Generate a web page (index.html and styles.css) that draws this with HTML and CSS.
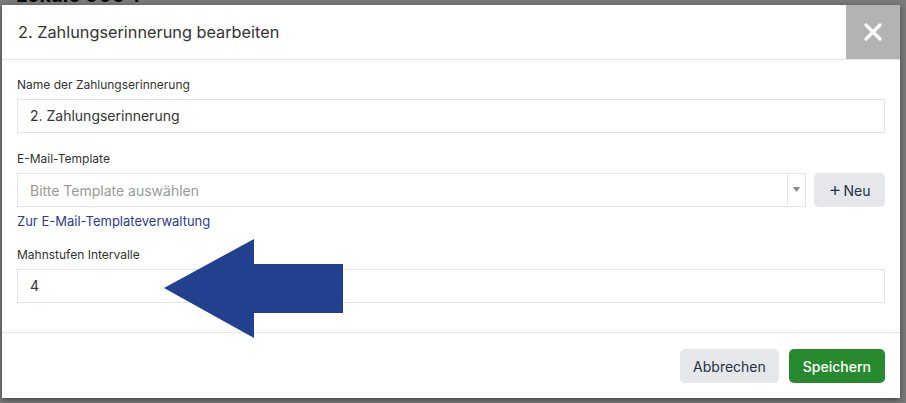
FILE: index.html
```html
<!DOCTYPE html>
<html lang="de">
<head>
<meta charset="utf-8">
<title>2. Zahlungserinnerung bearbeiten</title>
<link rel="stylesheet" href="styles.css">
</head>
<body>
<div class="page">
  <div class="page-title">Lokale 000 T</div>
  <div class="page-rows">
    <div class="page-row"></div>
    <div class="page-row"></div>
    <div class="page-row"></div>
  </div>
</div>
<div class="overlay"></div>
<div class="modal">
  <div class="modal-header">
    <h2 class="modal-title">2. Zahlungserinnerung bearbeiten</h2>
    <button class="close-btn" aria-label="Schließen">
      <svg width="18" height="18" viewBox="0 0 18 18"><path d="M2 2 L16 16 M16 2 L2 16" stroke="#fff" stroke-width="3.2" stroke-linecap="round"/></svg>
    </button>
  </div>
  <div class="modal-body">
    <div class="field">
      <label class="label">Name der Zahlungserinnerung</label>
      <div class="input">2. Zahlungserinnerung</div>
    </div>
    <div class="field">
      <label class="label">E-Mail-Template</label>
      <div class="select-row">
        <div class="select">
          <span class="placeholder">Bitte Template auswählen</span>
          <span class="select-arrow"><svg width="7" height="5" viewBox="0 0 7 5"><path d="M0 0 H7 L3.5 5 Z" fill="#888"/></svg></span>
        </div>
        <button class="btn btn-light btn-new"><span class="plus">+</span>Neu</button>
      </div>
      <a class="link">Zur E-Mail-Templateverwaltung</a>
    </div>
    <div class="field">
      <label class="label">Mahnstufen Intervalle</label>
      <div class="input">4</div>
    </div>
  </div>
  <div class="modal-footer">
    <button class="btn btn-light btn-footer">Abbrechen</button>
    <button class="btn btn-green btn-footer">Speichern</button>
  </div>
</div>
<svg class="annotation-arrow" width="906" height="403" viewBox="0 0 906 403">
  <polygon points="164,288 254,239 254,264 343,264 343,313 254,313 254,338" fill="#21418f"/>
</svg>
</body>
</html>
```

FILE: styles.css
```css
* { box-sizing: border-box; }
html, body { margin: 0; padding: 0; }
body {
  width: 906px;
  height: 403px;
  overflow: hidden;
  position: relative;
  font-family: Inter, "Noto Sans", "Liberation Sans", sans-serif;
  background: #fff;
  color: #333;
}
.page { padding: 0 16px; }
.page-title {
  font-weight: 700;
  font-size: 20px;
  line-height: 20px;
  margin-top: -15px;
  color: #111;
}
.page-rows { margin-top: 180px; }
.page-row { height: 62px; border-bottom: 1px solid #444; }
.overlay {
  position: absolute;
  inset: 0;
  background: rgba(0, 0, 0, 0.52);
}
.modal {
  position: absolute;
  left: 2px;
  top: 5px;
  width: 898px;
  height: 393px;
  background: #fff;
  box-shadow: 0 2px 6px rgba(0,0,0,0.45);
  display: flex;
  flex-direction: column;
}
.modal-header {
  height: 55px;
  border-bottom: 1px solid #e6e6e6;
  display: flex;
  align-items: center;
  justify-content: space-between;
}
.modal-title {
  margin: 0 0 1px 16px;
  font-size: 16.3px;
  font-weight: 400;
  color: #333;
}
.close-btn {
  width: 54px;
  height: 54px;
  border: 0;
  padding: 0;
  background: #b3b3b3;
  display: flex;
  align-items: center;
  justify-content: center;
  align-self: flex-start;
}
.modal-body {
  padding: 17px 15px 0 15px;
  height: 273px;
  border-bottom: 1px solid #e6e6e6;
}
.field + .field { margin-top: 18px; }
.label {
  display: block;
  font-size: 12px;
  line-height: 15px;
  color: #333;
  margin-bottom: 7px;
}
.input {
  height: 34px;
  border: 1px solid #e4e4e4;
  padding: 0 12px;
  font-size: 14px;
  line-height: 32px;
  color: #333;
}
.select-row {
  display: flex;
  gap: 8px;
}
.select {
  flex: 1;
  height: 34px;
  border: 1px solid #e4e4e4;
  display: flex;
  align-items: center;
  padding-left: 12px;
  font-size: 14px;
}
.placeholder { flex: 1; color: #9a9a9a; }
.select-arrow {
  width: 18px;
  height: 32px;
  border-left: 1px solid #e4e4e4;
  display: flex;
  align-items: center;
  justify-content: center;
  margin-top: -2px;
}
.btn {
  border: 0;
  border-radius: 5px;
  font-family: Inter, "Noto Sans", "Liberation Sans", sans-serif;
  font-size: 14px;
  cursor: pointer;
}
.btn-light { background: #e5e7ea; color: #263044; }
.btn-new {
  width: 71px;
  height: 34px;
  display: flex;
  align-items: center;
  justify-content: center;
}
.plus { font-size: 20px; font-weight: 300; line-height: 20px; margin-right: 2px; margin-top: -2px; }
.link {
  display: block;
  font-size: 13px;
  color: #2b3d8f;
  margin-top: 6px;
  line-height: 16px;
}
.modal-footer {
  display: flex;
  justify-content: flex-end;
  gap: 10px;
  padding: 16px 15px 0 0;
}
.btn-footer {
  height: 34px;
  padding: 0 13px;
  font-size: 14px;
}
.btn-green { background: #288a2f; color: #fff; font-weight: 500; padding: 0 14px; }
.annotation-arrow {
  position: absolute;
  left: 0;
  top: 0;
  pointer-events: none;
}
```
